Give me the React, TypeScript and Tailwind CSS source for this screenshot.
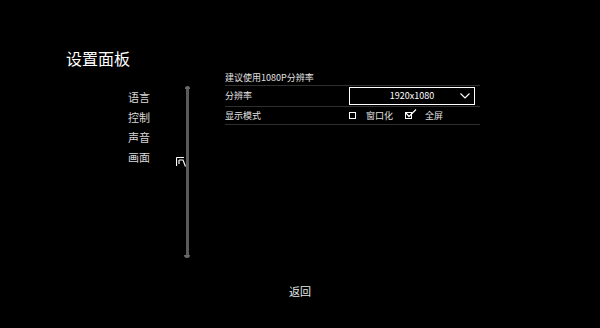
import React from "react";

const font = { fontFamily: '"Noto Sans CJK SC", "Noto Sans", sans-serif' };

export default function App() {
  return (
    <div className="relative w-[600px] h-[328px] bg-black text-white overflow-hidden" style={font}>
      <div className="pl-[66px] pt-[48px] h-[68px] text-[16px] leading-[20px] tracking-[0px] text-white">设置面板</div>
      <div className="mt-[2px] flex">
        <div className="w-[184px] pl-[128px] pt-[17px] flex flex-col text-[11px] text-[#d8d8d8]">
          <div className="h-[20px] leading-[20px]">语言</div>
          <div className="h-[20px] leading-[20px]">控制</div>
          <div className="h-[20px] leading-[20px]">声音</div>
          <div className="h-[20px] leading-[20px]">画面</div>
        </div>
        <div className="mt-[16px] w-[6px] h-[172px] flex flex-col items-center">
          <div className="w-[5px] h-[3px] bg-[#6a6a6a] rounded-t-full" />
          <div className="w-[3px] flex-1 bg-[#5a5a5a]" />
          <div className="w-[6px] h-[3px] bg-[#6a6a6a] rounded-b-full" />
        </div>
        <div className="ml-[35px] w-[255px] flex flex-col text-[9px] text-[#e0e0e0]">
          <div className="h-[15px] leading-[13px] pt-[1px]">建议使用1080P分辨率</div>
          <div className="h-px bg-[#2e2e2e]" />
          <div className="h-[20px] flex items-center">
            <div className="w-[124px]">分辨率</div>
            <div className="w-[126px] h-[18px] border border-white flex items-center relative">
              <div className="flex-1 text-center text-white">1920x1080</div>
              <svg className="absolute right-[4px] top-[5px]" width="10" height="6" viewBox="0 0 10 6">
                <path d="M0.5 0.5 L5 5 L9.5 0.5" stroke="white" strokeWidth="1.2" fill="none" />
              </svg>
            </div>
          </div>
          <div className="h-px bg-[#2e2e2e]" />
          <div className="h-[17px] flex items-center">
            <div className="w-[124px]">显示模式</div>
            <div className="w-[7px] h-[7px] border-[1.5px] border-white" />
            <div className="ml-[10px]">窗口化</div>
            <div className="ml-[12px] relative w-[7px] h-[7px] border-[1.5px] border-white">
              <svg className="absolute -left-[1px] -top-[4px]" width="14" height="10" viewBox="0 0 14 10">
                <path d="M1 4 L4 7.5 L11 0.5" stroke="white" strokeWidth="1.2" fill="none" />
              </svg>
            </div>
            <div className="ml-[13px]">全屏</div>
          </div>
          <div className="h-px bg-[#2e2e2e]" />
        </div>
      </div>
      <div className="absolute left-0 right-0 top-[283px] text-center text-[11px] leading-[16px] text-[#e8e8e8]">返回</div>
      <svg className="absolute left-[176px] top-[157px]" width="10" height="10" viewBox="0 0 10 10">
        <path d="M0.5 0.5 H8 M0.5 0.5 V9" stroke="white" strokeWidth="1.2" fill="none" />
        <path d="M3 3 H7 L9.5 9.5 M3 3 V7" stroke="white" strokeWidth="1.2" fill="none" />
      </svg>
    </div>
  );
}
